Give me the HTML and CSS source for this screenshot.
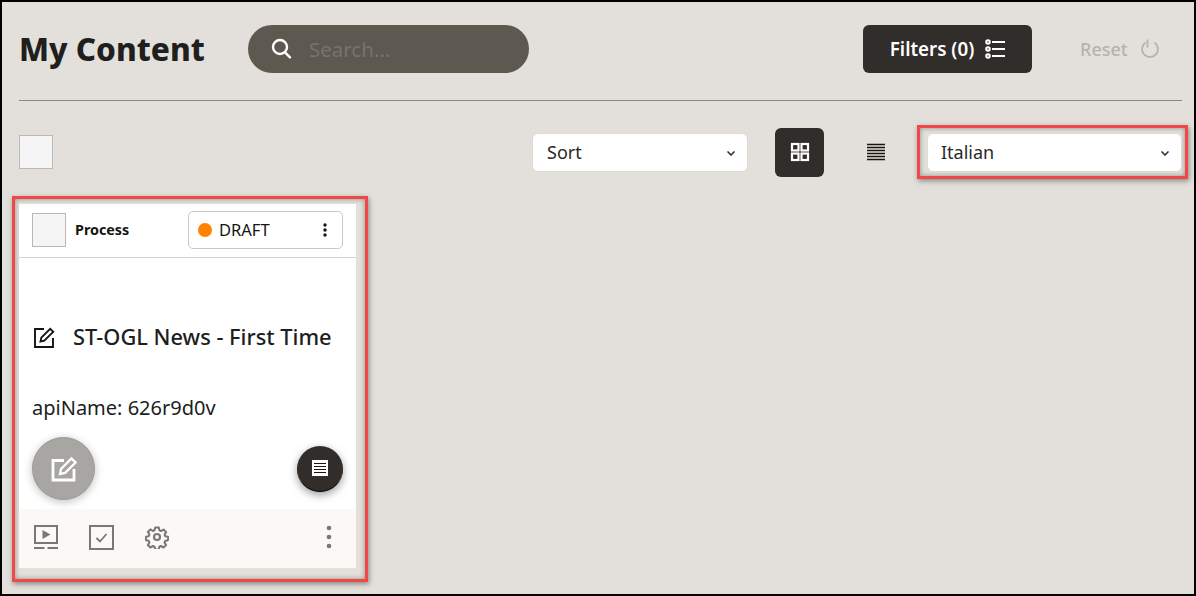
FILE: index.html
```html
<!DOCTYPE html>
<html lang="en">
<head>
  <meta charset="UTF-8" />
  <title>My Content</title>
  <link rel="stylesheet" href="styles.css">
</head>
<body>
  <div class="page">
    <header class="header">
      <h1>My Content</h1>
      <div class="search">
        <svg width="24" height="24" viewBox="0 0 24 24" fill="none" stroke="#fff" stroke-width="2.4"><circle cx="11" cy="10" r="7"/><path d="M16 15.400l5 5" stroke-linecap="round"/></svg>
        <span>Search...</span>
      </div>
      <button class="filters">
        Filters (0)
        <svg width="20" height="20" viewBox="0 0 20 20" fill="none" stroke="#fff" stroke-width="2"><circle cx="3" cy="3" r="1.800"/><circle cx="3" cy="10" r="1.800"/><circle cx="3" cy="17" r="1.800"/><path d="M7 3h13M7 10h13M7 17h13"/></svg>
      </button>
      <div class="reset">
        Reset
        <svg width="20" height="20" viewBox="0 0 20 20" fill="none" stroke="#b5b3ae" stroke-width="1.800"><path d="M5.500 3.500a8 8 0 1 0 9 0"/><path d="M7.500 .5v8"/></svg>
      </div>
    </header>

    <div class="toolbar">
      <div class="check"></div>
      <div class="select sort">
        <span>Sort</span>
        <svg class="chev" width="8" height="5" viewBox="0 0 8 5" fill="none" stroke="#2b2826" stroke-width="1.500"><path d="M.5.5L4 4 7.500.5"/></svg>
      </div>
      <div class="view-btn active">
        <svg width="20" height="20" viewBox="0 0 20 20" fill="none" stroke="#fff" stroke-width="2.200"><rect x="2" y="2" width="6.500" height="6.500"/><rect x="11.500" y="2" width="6.500" height="6.500"/><rect x="2" y="11.500" width="6.500" height="6.500"/><rect x="11.500" y="11.500" width="6.500" height="6.500"/></svg>
      </div>
      <div class="view-btn">
        <svg width="20" height="18" viewBox="0 0 20 18" fill="none" stroke="#161513" stroke-width="1.400"><path d="M1 1.500h18M1 4.500h18M1 7.500h18M1 10.500h18M1 13.500h18M1 16.500h18"/></svg>
      </div>
      <div class="mark mark-lang">
        <div class="select lang">
          <span>Italian</span>
          <svg class="chev" width="8" height="5" viewBox="0 0 8 5" fill="none" stroke="#2b2826" stroke-width="1.500"><path d="M.5.5L4 4 7.500.5"/></svg>
        </div>
      </div>
    </div>

    <div class="mark mark-card">
      <article class="card">
        <div class="card-top">
          <div class="check"></div>
          <strong class="type">Process</strong>
          <div class="status">
            <i class="dot"></i>
            <span>DRAFT</span>
            <svg class="more" width="4" height="14" viewBox="0 0 4 14" fill="#161513"><circle cx="2" cy="2" r="1.700"/><circle cx="2" cy="7" r="1.700"/><circle cx="2" cy="12" r="1.700"/></svg>
          </div>
        </div>
        <div class="card-body">
          <h2 class="card-title">
            <svg width="22" height="22" viewBox="0 0 22 22" fill="none" stroke="#161513" stroke-width="1.900"><path d="M11 3H2v18h18v-9"/><path d="M7.500 15.500l.8-3.800L17.200 2.800l3 3-8.900 8.900z"/></svg>
            ST-OGL News - First Time
          </h2>
          <p class="api">apiName: 626r9d0v</p>
          <div class="fabs">
            <div class="fab fab-edit">
              <svg width="26" height="26" viewBox="0 0 26 26" fill="none" stroke="#fff" stroke-width="2.800"><path d="M13 4.500H2V24h21V13"/><path d="M9 18l1-5L20.500 2.500l4 4L14 17z" stroke-width="2.400"/></svg>
            </div>
            <div class="fab fab-doc">
              <svg width="16" height="16" viewBox="0 0 16 16"><rect width="16" height="16" fill="#fff"/><path d="M2 3.500h12M2 6.500h12M2 9.500h12M2 12.500h12" stroke="#161513" stroke-width="1.200"/></svg>
            </div>
          </div>
        </div>
        <div class="card-foot">
          <svg width="24" height="24" viewBox="0 0 24 24" fill="none" stroke="#7a7875" stroke-width="2"><rect x="1" y="1" width="22" height="17"/><path d="M8.500 5l8 4.500-8 4.500z" fill="#7a7875" stroke="none"/><path d="M0 23h10.500M13.500 23H24" stroke-width="2"/></svg>
          <svg width="25" height="25" viewBox="0 0 25 25" fill="none" stroke="#7a7875" stroke-width="2"><rect x="1" y="1" width="23" height="23"/><path d="M7.500 13l3.500 3.500 6.500-7.500" stroke-width="1.800"/></svg>
          <svg width="24" height="24" viewBox="0 0 24 24" fill="none" stroke="#7a7875" stroke-width="2.200" stroke-linejoin="round"><circle cx="12" cy="12" r="3"/><path d="M10 1.500h4l.6 3.200 1.900.8 2.700-1.800 2.900 2.900-1.800 2.700.8 1.900 3.200.6-.3 3.800-3 .7-.8 1.900 1.800 2.700-2.900 2.700-2.700-1.800-1.900.8-.6 3h-4l-.6-3-1.900-.8-2.700 1.800-2.800-2.800 1.800-2.700-.8-1.900-3-.6v-4l3-.6.800-1.900-1.800-2.700 2.800-2.800 2.700 1.800 1.900-.8z" transform="translate(1.100 1.100) scale(.91)"/></svg>
          <svg class="foot-more" width="6" height="24" viewBox="0 0 6 24" fill="#7a7875"><circle cx="3" cy="3" r="2.300"/><circle cx="3" cy="12" r="2.300"/><circle cx="3" cy="21" r="2.300"/></svg>
        </div>
      </article>
    </div>
  </div>
</body>
</html>
```

FILE: styles.css
```css
* {
  margin: 0;
  padding: 0;
  box-sizing: border-box;
  font-family: 'Noto Sans', sans-serif;
}

body {
  width: 1196px;
  height: 596px;
  overflow: hidden;
  background: #e3e0db;
  color: #161513;
}

.page {
  height: 596px;
  border: 2px solid #000;
  padding: 0 6px 0 10px;
}

/* Header */
.header {
  display: flex;
  align-items: center;
  height: 99px;
  margin-left: 7px;
  padding-bottom: 5px;
  border-bottom: 1px solid #8a8886;
  width: 1163px;
}

h1 {
  font-size: 31.500px;
  font-weight: 800;
  width: 229px;
  color: #211f1e;
}

.search {
  display: flex;
  align-items: center;
  gap: 16px;
  width: 281px;
  height: 48px;
  padding-left: 21px;
  border-radius: 24px;
  background: #5d5850;
  color: #77736d;
  font-size: 20.500px;
}

.filters {
  display: flex;
  align-items: center;
  justify-content: center;
  gap: 11px;
  width: 169px;
  height: 48px;
  margin-left: 334px;
  border: none;
  border-radius: 6px;
  background: #312d2a;
  color: #fff;
  font-size: 18.800px;
  font-weight: 600;
}

.reset {
  display: flex;
  align-items: center;
  gap: 12px;
  margin-left: 48px;
  color: #b5b3ae;
  font-size: 18px;
  font-weight: 500;
}

/* Toolbar */
.toolbar {
  display: flex;
  align-items: center;
  height: 54px;
  margin-top: 24px;
  padding-left: 7px;
}

.check {
  width: 34px;
  height: 34px;
  flex: none;
  border: 1px solid #b9b8b6;
  background: #f5f5f5;
}

.select {
  display: flex;
  align-items: center;
  justify-content: space-between;
  height: 39px;
  padding-bottom: 1px;
  background: #fff;
  border: 1px solid #dedbd6;
  border-radius: 6px;
  font-size: 18px;
  color: #2b2826;
}

.sort {
  width: 216px;
  margin-left: 479px;
  padding-left: 14px;
  padding-right: 12px;
}

.lang {
  width: 255px;
  padding-left: 13px;
  padding-right: 12px;
}

.chev {
  margin-top: 3px;
}

.view-btn {
  display: flex;
  align-items: center;
  justify-content: center;
  width: 49px;
  height: 49px;
  margin-left: 27px;
  border-radius: 6px;
}

.view-btn.active {
  background: #312d2a;
}

/* Red annotation boxes */
.mark {
  border: 3px solid #f04848;
  box-shadow: 1px 2px 5px rgba(60, 60, 60, .55), inset 0 0 5px rgba(60, 60, 60, .5);
}

.mark-lang {
  width: 271px;
  height: 54px;
  margin-left: 17px;
  padding: 5px 3px 5px 7px;
}

.mark-card {
  width: 356px;
  height: 386px;
  margin-top: 17px;
  padding: 5px 9px 11px 4px;
}

/* Card */
.card {
  display: flex;
  flex-direction: column;
  height: 100%;
  width: 337px;
  background: #fff;
}

.card-top {
  display: flex;
  align-items: center;
  height: 54px;
  flex: none;
  padding: 0 13px 2px;
  border-bottom: 1px solid #d5d4d2;
}

.type {
  margin-left: 9px;
  font-size: 14.300px;
  font-weight: 700;
}

.status {
  display: flex;
  align-items: center;
  width: 155px;
  height: 38px;
  margin-left: auto;
  padding: 0 15px 0 9px;
  border: 1px solid #c9c8c6;
  border-radius: 5px;
  font-size: 16.500px;
}

.dot {
  width: 14px;
  height: 14px;
  border-radius: 50%;
  background: #ff8200;
  margin-right: 7px;
}

.more {
  margin-left: auto;
}

.card-body {
  flex: 1;
  padding: 0 13px;
}

.card-title {
  display: flex;
  align-items: center;
  gap: 18px;
  margin-top: 64px;
  margin-left: 1px;
  font-size: 21.800px;
  font-weight: 500;
  white-space: nowrap;
  color: #201e1c;
}

.api {
  margin-top: 43px;
  font-size: 20px;
  color: #201e1c;
}

.fabs {
  display: flex;
  align-items: center;
  justify-content: space-between;
  margin-top: 16px;
}

.fab {
  display: flex;
  align-items: center;
  justify-content: center;
  border-radius: 50%;
}

.fab-edit {
  width: 63px;
  height: 63px;
  background: #a8a6a3;
  box-shadow: 0 2px 8px rgba(0, 0, 0, .25);
  border: 1px solid #9d9b98;
}

.fab-doc {
  width: 46px;
  height: 46px;
  background: #312d2a;
  box-shadow: 0 3px 9px rgba(0, 0, 0, .4);
  border-bottom: 1px solid #000;
}

.card-foot {
  display: flex;
  align-items: center;
  gap: 31px;
  flex: none;
  height: 59px;
  padding: 0 24px 3px 15px;
  background: #fbf8f6;
}

.foot-more {
  margin-left: auto;
}
```
